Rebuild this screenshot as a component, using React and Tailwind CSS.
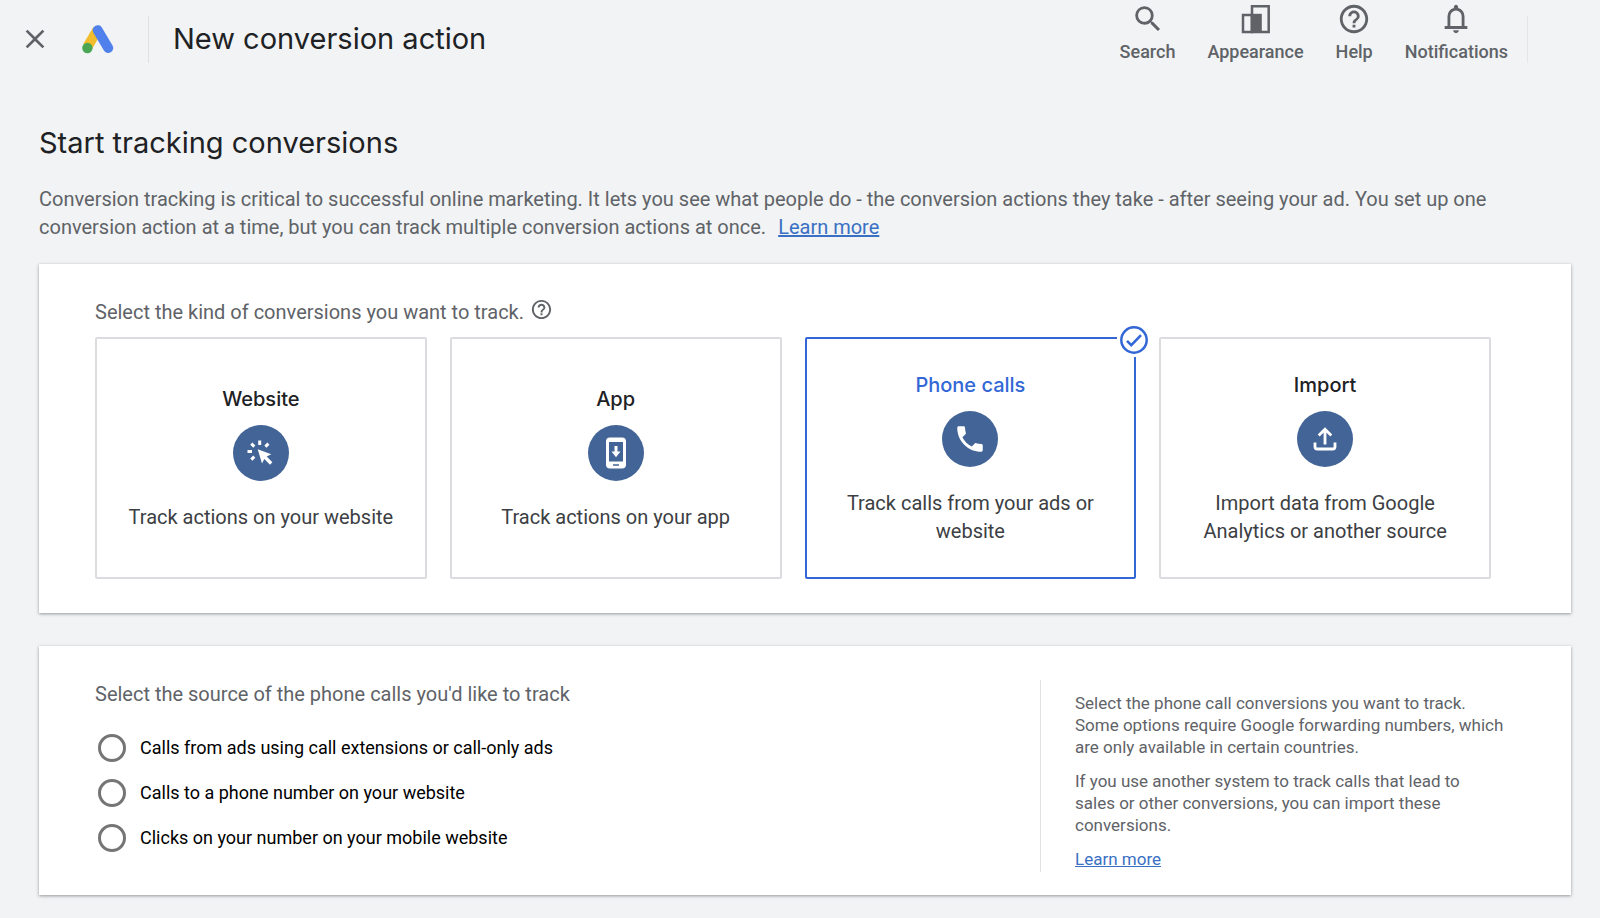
import React, { useState } from 'react';
import { MdClose, MdSearch, MdHelpOutline, MdPhone } from 'react-icons/md';

const AdsLogo = () => (
  <svg className="h-8 w-8" viewBox="0 0 32 32" fill="none" aria-hidden="true">
    <path d="M15.500 6.800 5.600 23.600" stroke="#f2bd2c" strokeWidth="10" />
    <path d="M15.700 7.200 26.200 25" stroke="#4f80ec" strokeWidth="10" strokeLinecap="round" />
    <circle cx="5.400" cy="25" r="5.200" fill="#4aa653" />
  </svg>
);

const AppearanceIcon = () => (
  <svg className="h-[34px] w-[34px]" viewBox="0 0 34 34" fill="none" aria-hidden="true">
    <path d="M4 13h9v17H4z" stroke="#5f6368" strokeWidth="2.500" />
    <path d="M13 4.300h16.700V30H13z" stroke="#5f6368" strokeWidth="2.500" />
    <path d="M11.800 11.800h11V31h-11z" fill="#5f6368" />
  </svg>
);

const BellIcon = () => (
  <svg className="h-[34px] w-[34px]" viewBox="0 -960 960 960" fill="currentColor" aria-hidden="true">
    <path d="M160-200v-80h80v-280q0-83 50-147.500T420-792v-28q0-25 17.500-42.500T480-880q25 0 42.500 17.500T540-820v28q80 20 130 84.500T720-560v280h80v80H160Zm320 120q-33 0-56.500-23.500T400-160h160q0 33-23.500 56.500T480-80ZM320-280h320v-280q0-66-47-113t-113-47q-66 0-113 47t-47 113v280Z" />
  </svg>
);

const ClickIcon = () => (
  <svg className="h-8 w-8" viewBox="0 0 32 32" fill="none" aria-hidden="true">
    <path d="M12.700 12.200 26.300 17.200 21.700 19.600 27.400 25.200 25 27.700 19.300 22 17 26.600z" fill="#fff" />
    <path
      d="M14.700 3.500v4.500M2.500 14.500H7M6.300 6.600l3 3M23.400 6.600l-3 3M6.300 22.600l3-3"
      stroke="#fff"
      strokeWidth="3"
    />
  </svg>
);

const InstallIcon = () => (
  <svg className="h-8 w-8" viewBox="0 0 32 32" fill="none" aria-hidden="true">
    <rect x="6" y="0.500" width="20" height="31" rx="4" fill="#fff" />
    <path d="M9 5h14v19.500H9z" fill="#426497" />
    <path d="M14.500 9h3v5.500h3L16 20.200l-4.500-5.700h3z" fill="#fff" />
    <path d="M13 28h6" stroke="#426497" strokeWidth="1.500" />
  </svg>
);

const UploadIcon = () => (
  <svg className="h-8 w-8" viewBox="0 0 32 32" fill="none" stroke="#fff" strokeWidth="2.800" aria-hidden="true">
    <path d="M16 21.500V6M9.700 12.500 16 6.200l6.300 6.300" />
    <path d="M6 19.500v4.200q0 2.300 2.300 2.300h15.400q2.300 0 2.300-2.300v-4.200" />
  </svg>
);

const CheckBadge = () => (
  <span className="absolute -top-4 -right-[17px] flex h-[34px] w-[34px] items-center justify-center bg-white">
    <svg className="h-7 w-7" viewBox="0 0 28 28" fill="none" stroke="#3367d6" aria-hidden="true">
      <circle cx="14" cy="14" r="12.700" strokeWidth="2.500" />
      <path d="M7 14.800l4.300 4.300L21 9.200" strokeWidth="2.600" />
    </svg>
  </span>
);

const navItems = [
  { label: 'Search', icon: <MdSearch size={34} /> },
  { label: 'Appearance', icon: <AppearanceIcon /> },
  { label: 'Help', icon: <MdHelpOutline size={34} /> },
  { label: 'Notifications', icon: <BellIcon /> },
];

const kinds = [
  { id: 'website', title: 'Website', text: 'Track actions on your website', icon: <ClickIcon /> },
  { id: 'app', title: 'App', text: 'Track actions on your app', icon: <InstallIcon /> },
  { id: 'phone', title: 'Phone calls', text: 'Track calls from your ads or website', icon: <MdPhone size={34} /> },
  { id: 'import', title: 'Import', text: 'Import data from Google Analytics or another source', icon: <UploadIcon /> },
];

const sources = [
  { id: 'ads', label: 'Calls from ads using call extensions or call-only ads' },
  { id: 'site', label: 'Calls to a phone number on your website' },
  { id: 'mobile', label: 'Clicks on your number on your mobile website' },
];

const Header = () => (
  <header className="flex h-[78px] items-center pl-[19px] pr-[72px]">
    <button type="button" aria-label="Close" className="text-[#5f6368]">
      <MdClose size={32} />
    </button>
    <div className="ml-[31px]">
      <AdsLogo />
    </div>
    <div className="ml-[34px] h-[47px] border-l border-[#dfe1e3]" />
    <div className="ml-6 font-[Inter,sans-serif] text-[29px] leading-10 text-[#202124]">New conversion action</div>
    <nav className="ml-auto flex h-full items-start gap-8 pt-0.5">
      {navItems.map((item) => (
        <button key={item.label} type="button" className="flex flex-col items-center text-[#5f6368]">
          {item.icon}
          <span className="mt-1 text-lg leading-6 font-medium">{item.label}</span>
        </button>
      ))}
    </nav>
    <div className="ml-[19px] h-[47px] border-l border-[#e4e6e8]" />
  </header>
);

const KindCard = ({ kind, selected, onSelect }) => (
  <button
    type="button"
    aria-pressed={selected}
    onClick={onSelect}
    className={`relative flex h-[242px] flex-col items-center justify-center rounded-xs border-2 px-6 ${
      selected ? 'border-[#3367d6]' : 'border-[#dadce0]'
    }`}
  >
    <span
      className={`font-[Inter,sans-serif] text-xl leading-7 font-medium ${selected ? 'text-[#3367d6]' : 'text-[#202124]'}`}
    >
      {kind.title}
    </span>
    <span className="mt-3 flex h-14 w-14 items-center justify-center rounded-full bg-[#426497] text-white">
      {kind.icon}
    </span>
    <span className="mt-[22px] text-xl leading-7 text-[#3c4043]">{kind.text}</span>
    {selected && <CheckBadge />}
  </button>
);

const App = () => {
  const [kind, setKind] = useState('phone');
  const [source, setSource] = useState('');

  return (
    <div className="min-h-screen bg-[#f1f3f4] pb-[22px] font-[Roboto,sans-serif] text-[#5f6368]">
      <Header />
      <main className="pr-[29px] pl-[39px]">
        <h1 className="pt-[45px] font-[Inter,sans-serif] text-[29px] leading-10 text-[#202124]">
          Start tracking conversions
        </h1>
        <p className="mt-[22px] text-xl leading-7">
          Conversion tracking is critical to successful online marketing. It lets you see what people do - the
          conversion actions they take - after seeing your ad. You set up one conversion action at a time, but you can
          track multiple conversion actions at once.
          <a href="#learn" className="ml-3 text-[#3a70c4] underline">Learn more</a>
        </p>

        <section className="mt-[23px] bg-white pt-[34px] pr-20 pb-[34px] pl-14 shadow-[0_1px_3px_rgba(60,64,67,0.500)]">
          <div className="flex items-start gap-1.5 text-xl leading-7">
            <h2>Select the kind of conversions you want to track.</h2>
            <button type="button" aria-label="About conversion kinds">
              <MdHelpOutline size={23} />
            </button>
          </div>
          <div className="mt-[11px] grid grid-cols-4 gap-[23px]">
            {kinds.map((item) => (
              <KindCard key={item.id} kind={item} selected={kind === item.id} onSelect={() => setKind(item.id)} />
            ))}
          </div>
        </section>

        <section className="mt-[33px] flex bg-white pt-[34px] pr-12 pb-[23px] pl-14 shadow-[0_1px_3px_rgba(60,64,67,0.500)]">
          <fieldset className="flex-1">
            <legend className="text-xl leading-7">Select the source of the phone calls you'd like to track</legend>
            <div className="mt-[26px] flex flex-col gap-[17px]">
              {sources.map((item) => (
                <label key={item.id} className="flex items-center gap-[14px] pl-[3px] text-lg leading-7 text-black">
                  <input
                    type="radio"
                    name="source"
                    value={item.id}
                    checked={source === item.id}
                    onChange={() => setSource(item.id)}
                    className="h-7 w-7 appearance-none rounded-full border-3 border-[#757575] checked:border-8 checked:border-[#3367d6]"
                  />
                  {item.label}
                </label>
              ))}
            </div>
          </fieldset>
          <aside className="flex w-[483px] flex-col gap-3 border-l border-[#dfe1e3] pt-3 pb-0.5 pl-[34px] text-[17px] leading-[22px]">
            <p>
              Select the phone call conversions you want to track.
              <br />
              Some options require Google forwarding numbers, which
              <br />
              are only available in certain countries.
            </p>
            <p>
              If you use another system to track calls that lead to
              <br />
              sales or other conversions, you can import these
              <br />
              conversions.
            </p>
            <p>
              <a href="#import" className="text-[#3a70c4] underline">Learn more</a>
            </p>
          </aside>
        </section>
      </main>
    </div>
  );
};

export default App;
